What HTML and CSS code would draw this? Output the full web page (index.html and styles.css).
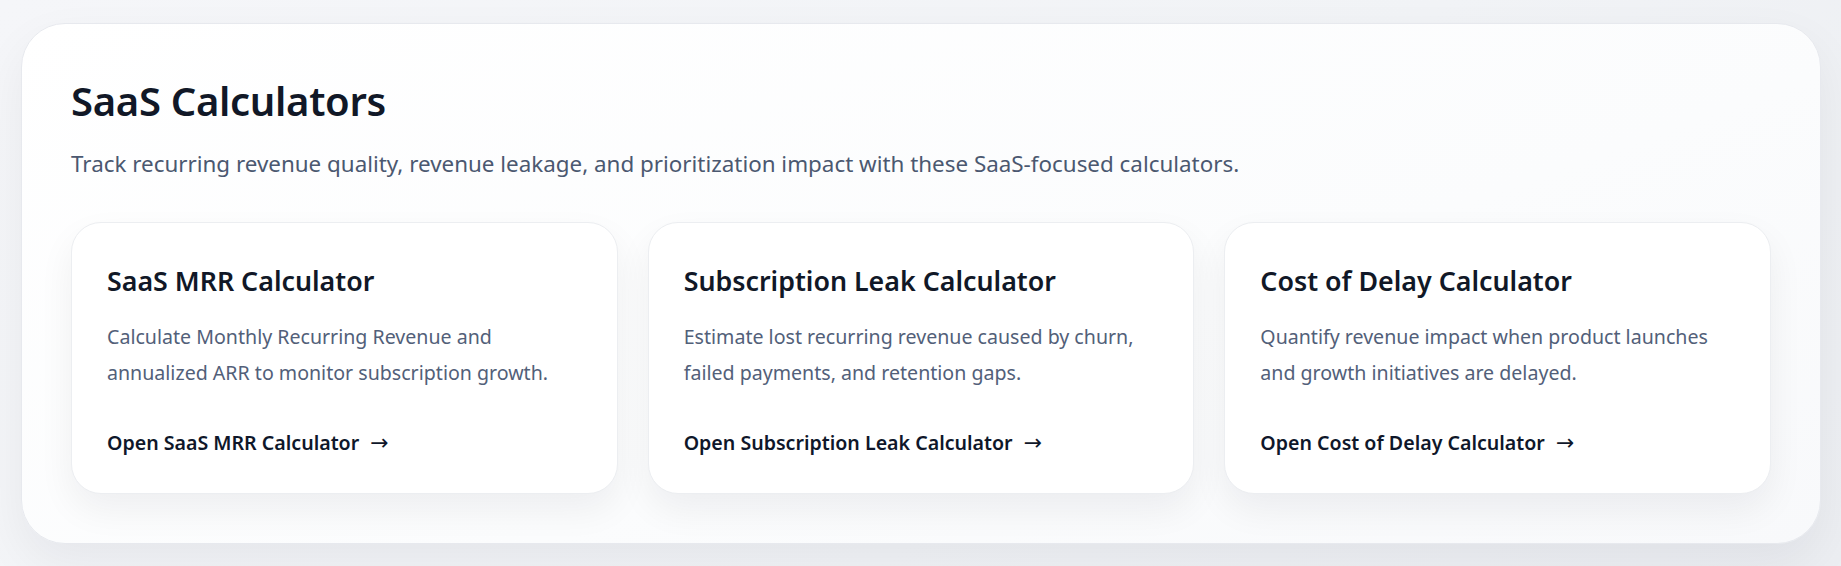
FILE: index.html
```html
<!DOCTYPE html>
<html lang="en">
<head>
<meta charset="utf-8">
<title>SaaS Calculators</title>
<link rel="stylesheet" href="styles.css">
</head>
<body>
<section class="panel">
  <h1 class="title">SaaS Calculators</h1>
  <p class="lead">Track recurring revenue quality, revenue leakage, and prioritization impact with these SaaS-focused calculators.</p>
  <div class="grid">
    <article class="card">
      <h2 class="card-title">SaaS MRR Calculator</h2>
      <p class="card-text">Calculate Monthly Recurring Revenue and annualized ARR to monitor subscription growth.</p>
      <a class="card-link" href="#">Open SaaS MRR Calculator <span class="arrow">→</span></a>
    </article>
    <article class="card">
      <h2 class="card-title">Subscription Leak Calculator</h2>
      <p class="card-text">Estimate lost recurring revenue caused by churn, failed payments, and retention gaps.</p>
      <a class="card-link" href="#">Open Subscription Leak Calculator <span class="arrow">→</span></a>
    </article>
    <article class="card">
      <h2 class="card-title">Cost of Delay Calculator</h2>
      <p class="card-text">Quantify revenue impact when product launches and growth initiatives are delayed.</p>
      <a class="card-link" href="#">Open Cost of Delay Calculator <span class="arrow">→</span></a>
    </article>
  </div>
</section>
</body>
</html>
```

FILE: styles.css
```css
* { box-sizing: border-box; }
html, body { height: 100%; }
body {
  margin: 0;
  padding: 23px 20px 22px 21px;
  background: linear-gradient(135deg, #f5f6f9 0%, #f1f3f6 60%, #eceef2 100%);
  font-family: "Segoe UI", "Noto Sans", "Open Sans", sans-serif;
  color: #0f172a;
}
.panel {
  width: 1800px;
  border: 1px solid #e7e9ee;
  border-radius: 44px;
  background: linear-gradient(160deg, #ffffff 0%, #fbfcfd 60%, #f8f9fb 100%);
  box-shadow: 0 20px 50px rgba(15, 23, 42, 0.06);
  padding: 49px 49px 49px 49px;
}
.title {
  margin: 0;
  font-size: 40px;
  font-weight: 600;
  line-height: 56px;
  letter-spacing: -0.3px;
  color: #111827;
}
.lead {
  margin: 18px 0 0;
  font-size: 22.4px;
  line-height: 33.6px;
  color: #4b5870;
}
.grid {
  display: grid;
  grid-template-columns: repeat(3, 1fr);
  gap: 30px;
  margin-top: 41px;
}
.card {
  display: flex;
  flex-direction: column;
  align-items: flex-start;
  height: 272px;
  background: #ffffff;
  border: 1px solid #eceef1;
  border-radius: 30px;
  box-shadow: 0 16px 36px rgba(15, 23, 42, 0.06);
  padding: 40px 35px 36px;
}
.card-title {
  margin: 0;
  font-size: 26.8px;
  font-weight: 600;
  line-height: 35.4px;
  color: #111827;
}
.card-text {
  margin: 21px 0 0;
  font-size: 19.6px;
  line-height: 36px;
  color: #526079;
}
.card-link {
  margin-top: auto;
  font-size: 19.6px;
  font-weight: 600;
  line-height: 27.7px;
  color: #0f172a;
  text-decoration: none;
}
.arrow {
  margin-left: 6px;
  font-family: "DejaVu Sans", sans-serif;
  font-size: 22px;
  font-weight: 400;
}
```
